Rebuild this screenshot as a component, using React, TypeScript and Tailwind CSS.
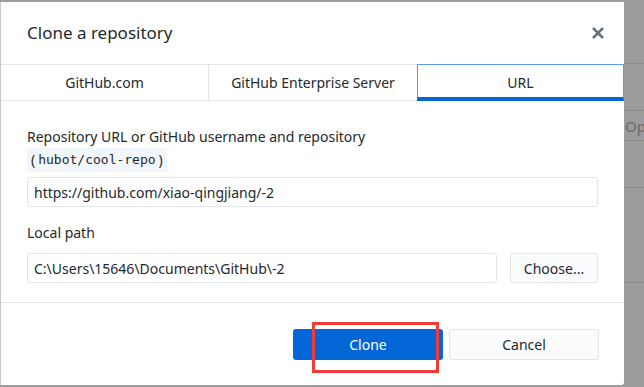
import React from 'react';

const font = { fontFamily: '"Noto Sans", "Open Sans", sans-serif' };

const App: React.FC = () => {
  return (
    <div className="w-[644px] h-[387px] bg-[#9c9c9c] overflow-hidden relative" style={font}>
      {/* underlying app, mostly covered */}
      <div className="absolute right-0 top-0 w-[20px] h-full overflow-hidden">
        <div className="h-[64px] border-b border-[#8a8a8a]" />
        <div className="h-[47px] border-b border-[#8a8a8a]" />
        <div className="h-[30px] border-b border-[#8a8a8a] text-[15px] text-[#6b6b6b] pl-[1px] leading-[30px] whitespace-nowrap">
          Ope
        </div>
        <div className="h-[47px] border-b border-[#8a8a8a]" />
        <div className="h-[95px] border-b border-[#8a8a8a]" />
      </div>

      <div className="absolute left-0 top-[2px] w-[624px] h-[383px] bg-white border-l border-[#c8c8c8] rounded-br-[3px] flex flex-col">
        {/* header */}
        <div className="h-[63px] flex items-center justify-between pl-[26px] pr-[19px] border-b border-[#e1e4e8]">
          <h1 className="text-[17px] text-[#24292e] leading-none -mt-[1px]">Clone a repository</h1>
          <svg width="14" height="14" viewBox="0 0 14 14" className="text-[#6a737d]">
            <path d="M2 2 L12 12 M12 2 L2 12" stroke="currentColor" strokeWidth="2.6" strokeLinecap="butt" />
          </svg>
        </div>

        {/* tabs */}
        <div className="h-[36px] flex border-b border-[#e1e4e8] text-[14px] text-[#24292e]">
          <div className="w-[208px] flex items-center justify-center border-r border-[#e1e4e8]">GitHub.com</div>
          <div className="w-[208px] flex items-center justify-center">GitHub Enterprise Server</div>
          <div className="flex-1 -mt-[1px] -mb-[1px] flex items-center justify-center border border-[#5a9be6] border-b-[4px] border-b-[#0366d6] pt-[3px]">
            URL
          </div>
        </div>

        {/* body */}
        <div className="flex-1 px-[26px] pt-[25px] text-[14px] text-[#24292e]">
          <div className="leading-[22px]">Repository URL or GitHub username and repository</div>
          <div className="leading-[24px] flex items-center">
            <span className="bg-[#f1f6fb] pl-[4px] pr-[4px] h-[24px] flex items-center">
              (<code className="px-[3px] text-[13px]" style={{ fontFamily: '"DejaVu Sans Mono", monospace' }}>hubot/cool-repo</code>)
            </span>
          </div>
          <div className="mt-[5px] h-[30px] border border-[#e1e4e8] rounded-[3px] flex items-center px-[6px]">
            https://github.com/xiao-qingjiang/-2
          </div>
          <div className="mt-[14px] leading-[24px]">Local path</div>
          <div className="mt-[8px] flex gap-[13px]">
            <div className="flex-1 h-[30px] border border-[#e1e4e8] rounded-[3px] flex items-center px-[6px]">
              C:\Users\15646\Documents\GitHub\-2
            </div>
            <div className="w-[88px] h-[30px] border border-[#e1e4e8] rounded-[3px] bg-[#fafbfc] flex items-center justify-center">
              Choose...
            </div>
          </div>
        </div>

        {/* footer */}
        <div className="h-[83px] border-t border-[#e1e4e8] flex justify-end items-start pt-[26px] pr-[25px] gap-[6px] text-[14px]">
          <div className="w-[150px] h-[31px] bg-[#0366d6] rounded-[3px] text-white flex items-center justify-center">Clone</div>
          <div className="w-[150px] h-[31px] bg-[#fafbfc] border border-[#e1e4e8] rounded-[3px] text-[#24292e] flex items-center justify-center">
            Cancel
          </div>
        </div>
      </div>

      {/* red annotation box */}
      <div className="absolute left-[312px] top-[322px] w-[127px] h-[51px] border-[3px] border-[#f23a3a]" />
    </div>
  );
};

export default App;
